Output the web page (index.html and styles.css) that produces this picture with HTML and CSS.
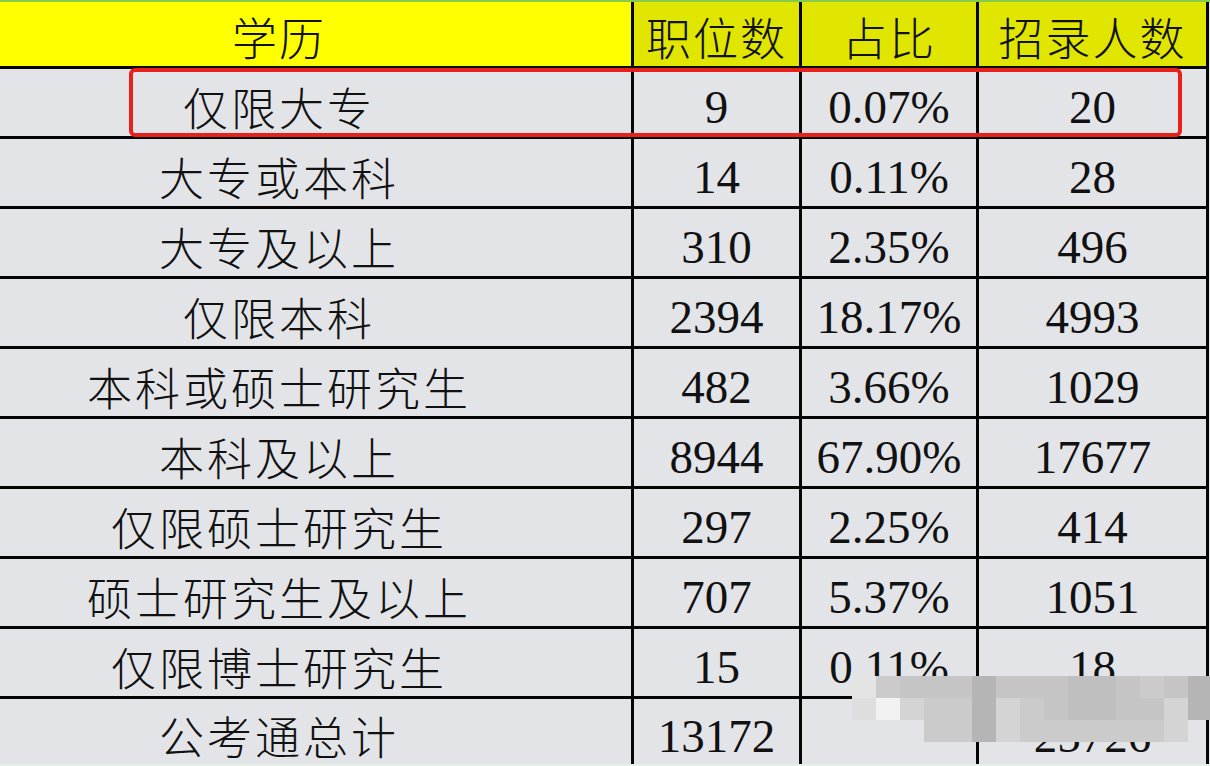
FILE: index.html
```html
<!DOCTYPE html>
<html lang="zh-CN">
<head>
<meta charset="utf-8">
<title>学历统计</title>
<link rel="stylesheet" href="styles.css">
</head>
<body>
<div class="page">
  <div class="sheet">
    <div class="cell hd hd-main name">学历</div>
    <div class="cell hd">职位数</div>
    <div class="cell hd">占比</div>
    <div class="cell hd">招录人数</div>

    <div class="cell name">仅限大专</div><div class="cell num">9</div><div class="cell num">0.07%</div><div class="cell num">20</div>
    <div class="cell name">大专或本科</div><div class="cell num">14</div><div class="cell num">0.11%</div><div class="cell num">28</div>
    <div class="cell name">大专及以上</div><div class="cell num">310</div><div class="cell num">2.35%</div><div class="cell num">496</div>
    <div class="cell name">仅限本科</div><div class="cell num">2394</div><div class="cell num">18.17%</div><div class="cell num">4993</div>
    <div class="cell name">本科或硕士研究生</div><div class="cell num">482</div><div class="cell num">3.66%</div><div class="cell num">1029</div>
    <div class="cell name">本科及以上</div><div class="cell num">8944</div><div class="cell num">67.90%</div><div class="cell num">17677</div>
    <div class="cell name">仅限硕士研究生</div><div class="cell num">297</div><div class="cell num">2.25%</div><div class="cell num">414</div>
    <div class="cell name">硕士研究生及以上</div><div class="cell num">707</div><div class="cell num">5.37%</div><div class="cell num">1051</div>
    <div class="cell name">仅限博士研究生</div><div class="cell num">15</div><div class="cell num">0.11%</div><div class="cell num">18</div>
    <div class="cell name">公考通总计</div><div class="cell num">13172</div><div class="cell num"></div><div class="cell num">25726</div>
  </div>

  <div class="highlight"></div>

  <div class="mosaic">
    <i class="g1"></i><i class="g4"></i><i class="g5"></i><i class="g5"></i><i class="g5"></i><i class="g7"></i><i class="g5"></i><i class="g5"></i><i class="g5"></i><i class="g6"></i><i class="g6"></i><i class="g5"></i><i class="g4"></i><i class="g5"></i><i class="g7"></i>
    <i class="g2"></i><i class="g0"></i><i class="g3"></i><i class="g4"></i><i class="g4"></i><i class="g7"></i><i class="g3"></i><i class="g4"></i><i class="g5"></i><i class="g6"></i><i class="g6"></i><i class="g5"></i><i class="g5"></i><i class="g3"></i><i class="g7"></i>
    <i class="t"></i><i class="t"></i><i class="t"></i><i class="g4"></i><i class="g4"></i><i class="g7"></i><i class="g3"></i><i class="g4"></i><i class="g4"></i><i class="g4"></i><i class="g4"></i><i class="g4"></i><i class="g4"></i><i class="g3"></i><i class="t"></i>
  </div>
</div>
</body>
</html>
```

FILE: styles.css
```css
html, body {
  margin: 0;
  padding: 0;
  background: #e2e4e7;
  overflow: hidden;
}

.page {
  position: relative;
  width: 1210px;
  height: 766px;
  overflow: hidden;
  border-top: 2px solid #86cc4a;
  border-bottom: 2px solid #e6efe6;
  box-sizing: border-box;
}

.sheet {
  display: grid;
  grid-template-columns: 631px 165px 174px 227px;
  grid-template-rows: 64px repeat(9, 67px) 65px;
  gap: 3px;
  width: max-content;
  background: #050505;
  border-right: 3px solid #050505;
}

.cell {
  background: #e2e4e7;
  display: flex;
  align-items: center;
  justify-content: center;
  color: #111;
  white-space: nowrap;
  box-sizing: border-box;
  line-height: 1.2;
}

.name {
  font-family: "Noto Sans CJK SC", "Noto Sans", sans-serif;
  font-weight: 300;
  font-size: 45px;
  padding-right: 73px;
  padding-top: 8px;
  letter-spacing: 3px;
}

.num {
  font-family: "Liberation Serif", "Times New Roman", serif;
  font-size: 47px;
  padding-top: 10px;
}

.hd {
  background: #e0e600;
  font-family: "Noto Sans CJK SC", "Noto Sans", sans-serif;
  font-weight: 300;
  font-size: 45px;
  letter-spacing: 2px;
  padding-top: 6px;
}

.hd-main {
  background: #ffff00;
}

.highlight {
  position: absolute;
  left: 129px;
  top: 66px;
  width: 1053px;
  height: 69px;
  box-sizing: border-box;
  border: 4px solid #e8211c;
  border-radius: 6px;
}

.mosaic {
  position: absolute;
  left: 852px;
  top: 674px;
  display: grid;
  grid-template-columns: repeat(15, 24px);
  grid-template-rows: repeat(3, 22px);
  filter: blur(0.6px);
}

.mosaic i { display: block; }
.mosaic .g0 { background: #f2f2f2; }
.mosaic .g1 { background: #e4e4e4; }
.mosaic .g2 { background: #dedede; }
.mosaic .g3 { background: #d4d4d4; }
.mosaic .g4 { background: #cbcbcb; }
.mosaic .g5 { background: #c5c5c5; }
.mosaic .g6 { background: #bfbfbf; }
.mosaic .g7 { background: #b5b5b5; }
.mosaic .t { background: transparent; }
```
